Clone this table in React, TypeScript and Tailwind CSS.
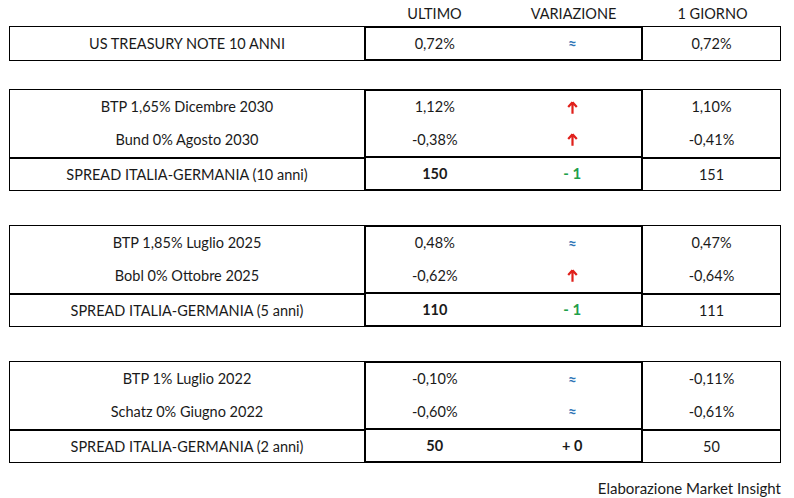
const font = { fontFamily: "Lato, 'Liberation Sans', sans-serif" };

type Trend = "up" | "flat";

type Bond = { name: string; last: string; trend: Trend; prev: string };
type Group = { bonds: Bond[]; spread?: { name: string; last: string; change: string; positive?: boolean; prev: string } };

const groups: Group[] = [
  {
    bonds: [
      { name: "BTP 1,65% Dicembre 2030", last: "1,12%", trend: "up", prev: "1,10%" },
      { name: "Bund 0% Agosto 2030", last: "-0,38%", trend: "up", prev: "-0,41%" },
    ],
    spread: { name: "SPREAD ITALIA-GERMANIA (10 anni)", last: "150", change: "- 1", prev: "151" },
  },
  {
    bonds: [
      { name: "BTP 1,85% Luglio 2025", last: "0,48%", trend: "flat", prev: "0,47%" },
      { name: "Bobl 0% Ottobre 2025", last: "-0,62%", trend: "up", prev: "-0,64%" },
    ],
    spread: { name: "SPREAD ITALIA-GERMANIA (5 anni)", last: "110", change: "- 1", prev: "111" },
  },
  {
    bonds: [
      { name: "BTP 1% Luglio 2022", last: "-0,10%", trend: "flat", prev: "-0,11%" },
      { name: "Schatz 0% Giugno 2022", last: "-0,60%", trend: "flat", prev: "-0,61%" },
    ],
    spread: { name: "SPREAD ITALIA-GERMANIA (2 anni)", last: "50", change: "+ 0", positive: true, prev: "50" },
  },
];

const UpArrow = () => (
  <svg width="11" height="13" viewBox="0 0 11 13">
    <path d="M5.5 1.2 L1.2 6 M5.5 1.2 L9.8 6 M5.5 1.8 L5.5 12.8" stroke="#e0201b" strokeWidth="2.2" fill="none" />
  </svg>
);

const Approx = () => <span className="text-[15px] font-bold leading-none text-[#2e75b6]">≈</span>;

const TrendIcon = ({ trend }: { trend: Trend }) => (trend === "up" ? <UpArrow /> : <Approx />);

const Cell = ({ children, className = "" }: { children: React.ReactNode; className?: string }) => (
  <div className={`flex flex-1 items-center justify-center ${className}`}>{children}</div>
);

const SpreadGroup = ({ g }: { g: Group }) => (
  <div className="flex h-[102px]">
    {/* names */}
    <div className="flex w-[356px] flex-col border border-black">
      {g.bonds.map((b) => (
        <Cell key={b.name}>{b.name}</Cell>
      ))}
      {g.spread && <div className="flex h-[33px] items-center justify-center border-t-2 border-black">{g.spread.name}</div>}
    </div>
    {/* ultimo + variazione */}
    <div className="-ml-px flex w-[279px] flex-col border-2 border-black">
      {g.bonds.map((b) => (
        <div key={b.name} className="flex flex-1">
          <Cell className="w-[139px]">{b.last}</Cell>
          <Cell className="w-[139px]">
            <TrendIcon trend={b.trend} />
          </Cell>
        </div>
      ))}
      {g.spread && (
        <div className="flex h-[33px] border-t-2 border-black font-bold">
          <Cell>{g.spread.last}</Cell>
          <Cell className={g.spread.positive ? "" : "text-[15px] text-[#1fa04a]"}>{g.spread.change}</Cell>
        </div>
      )}
    </div>
    {/* 1 giorno */}
    <div className="flex w-[138px] flex-col border border-l-0 border-black">
      {g.bonds.map((b) => (
        <Cell key={b.name}>{b.prev}</Cell>
      ))}
      {g.spread && <div className="flex h-[33px] items-center justify-center border-t-2 border-black">{g.spread.prev}</div>}
    </div>
  </div>
);

export default function App() {
  return (
    <div className="h-[498px] w-[794px] bg-white pl-[9px] text-[14.5px] text-[#1a1a1a]" style={font}>
      {/* header */}
      <div className="flex h-[26px] items-center pt-[2px]">
        <div className="w-[356px]" />
        <div className="w-[139px] text-center">ULTIMO</div>
        <div className="w-[139px] text-center">VARIAZIONE</div>
        <div className="w-[139px] text-center">1 GIORNO</div>
      </div>

      {/* us treasury */}
      <div className="flex h-[35px]">
        <div className="flex w-[356px] items-center justify-center border border-black">US TREASURY NOTE 10 ANNI</div>
        <div className="-ml-px flex w-[279px] border-2 border-black">
          <Cell>0,72%</Cell>
          <Cell>
            <Approx />
          </Cell>
        </div>
        <div className="flex w-[138px] items-center justify-center border border-l-0 border-black">0,72%</div>
      </div>

      <div className="mt-[28px] flex flex-col gap-[34px]">
        {groups.map((g, i) => (
          <SpreadGroup key={i} g={g} />
        ))}
      </div>

      <div className="mt-[14px] pr-[13px] text-right text-[15px]">Elaborazione Market Insight</div>
    </div>
  );
}
